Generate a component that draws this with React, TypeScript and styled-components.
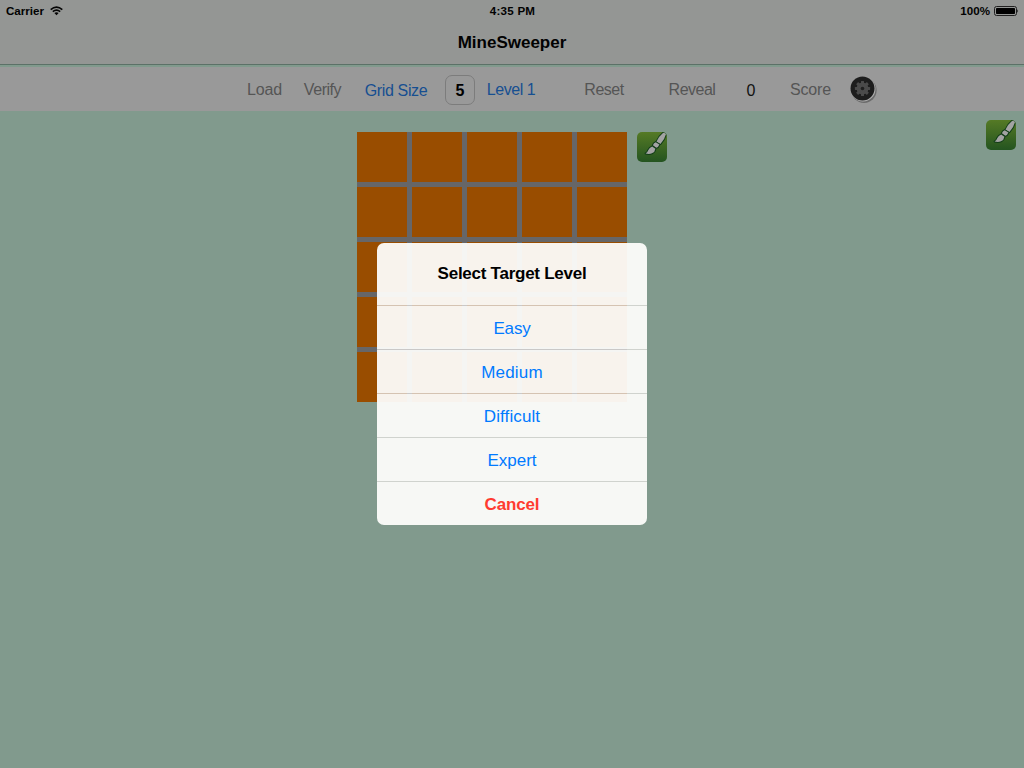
import React from "react";
import styled, { createGlobalStyle } from "styled-components";

const Global = createGlobalStyle`
  body { margin: 0; background: #819a8d; font-family: "Liberation Sans", Arial, sans-serif; }
`;

const Screen = styled.div`
  position: relative;
  width: 1024px;
  height: 768px;
  overflow: hidden;
  background: #819a8d;
`;

const Header = styled.header`
  height: 64px;
  background: #949694;
  border-bottom: 1px solid #5c7167;
  color: #020202;
`;

const StatusBar = styled.div`
  display: grid;
  grid-template-columns: 1fr auto 1fr;
  align-items: center;
  height: 22px;
  padding: 0 5px 0 6px;
  font-size: 11.6px;
  font-weight: 700;
  line-height: 22px;
`;

const Clock = styled.span`
  letter-spacing: 0.25px;
`;

const StatusGroup = styled.div<{ $end?: boolean }>`
  display: flex;
  align-items: center;
  gap: ${(p) => (p.$end ? 4 : 6)}px;
  justify-content: ${(p) => (p.$end ? "flex-end" : "flex-start")};
`;

const Title = styled.h1`
  margin: 0;
  text-align: center;
  font-size: 17px;
  font-weight: 700;
  line-height: 42px;
`;

const Toolbar = styled.nav`
  display: flex;
  align-items: flex-start;
  height: 44px;
  margin-top: 2px;
  padding-left: 247px;
  background: #999999;
`;

const Item = styled.span<{ $w: number; $gap?: number; $color?: string; $drop?: number; $track?: number }>`
  display: flex;
  justify-content: center;
  width: ${(p) => p.$w}px;
  margin-left: ${(p) => p.$gap ?? 0}px;
  padding-top: ${(p) => p.$drop ?? 0}px;
  color: ${(p) => p.$color ?? "#555555"};
  font-size: 16px;
  letter-spacing: ${(p) => p.$track ?? 0}px;
  line-height: 46px;
  white-space: nowrap;
`;

const SizeField = styled.span`
  display: flex;
  box-sizing: border-box;
  align-items: center;
  justify-content: center;
  width: 30px;
  height: 30px;
  margin: 8px 0 0 18px;
  padding-top: 1px;
  border: 1px solid #7c7c7c;
  border-radius: 7px;
  color: #000;
  font-size: 16px;
  font-weight: 700;
`;

const GearButton = styled.span`
  display: flex;
  margin: 8px 0 0 19px;
`;

const Board = styled.main`
  display: flex;
  align-items: flex-start;
  padding: 21px 8px 0 357px;
`;

const Grid = styled.div`
  display: grid;
  grid-template-columns: repeat(5, 50px);
  grid-auto-rows: 50px;
  gap: 5px;
  background: #666668;
`;

const Cell = styled.div`
  background: #994d00;
`;

const BrushButton = styled.div<{ $corner?: boolean }>`
  display: flex;
  margin: ${(p) => (p.$corner ? "-12px 0 0 auto" : "0 0 0 10px")};
`;

const Dialog = styled.section`
  position: absolute;
  top: 243px;
  left: 377px;
  width: 270px;
  border-radius: 7px;
  overflow: hidden;
  text-align: center;
`;

const DialogTitle = styled.h2`
  margin: 0;
  height: 62px;
  background: rgba(254, 254, 252, 0.94);
  color: #000;
  font-size: 17px;
  font-weight: 700;
  letter-spacing: -0.26px;
  line-height: 61px;
`;

const Option = styled.div<{ $cancel?: boolean; $track?: number }>`
  box-sizing: border-box;
  height: 44px;
  border-top: 1px solid rgba(227, 225, 222, 0.8);
  background: rgba(254, 254, 252, 0.94);
  background-clip: padding-box;
  color: ${(p) => (p.$cancel ? "#ff3b30" : "#007aff")};
  font-size: 17px;
  font-weight: ${(p) => (p.$cancel ? 700 : 400)};
  letter-spacing: ${(p) => p.$track ?? 0}px;
  line-height: 45px;
`;

const Wifi = () => (
  <svg width="13" height="10" viewBox="0 0 13 10" fill="none" stroke="#050505" strokeWidth="1.6">
    <path d="M0.7 3.6Q6.5 -1.4 12.3 3.6" />
    <path d="M2.8 5.7Q6.5 2.5 10.2 5.7" />
    <path d="M4.4 7.1Q6.5 5.5 8.6 7.1L6.5 9.3Z" fill="#050505" stroke="none" />
  </svg>
);

const Battery = () => (
  <svg width="25" height="10" viewBox="0 0 25 10">
    <rect x="0.5" y="0.5" width="22" height="9" rx="2" fill="none" stroke="#202020" />
    <rect x="2" y="2" width="19" height="6" rx="0.8" fill="#000" />
    <path d="M23.3 3.2Q25 5 23.3 6.8Z" fill="#111" />
  </svg>
);

const Gear = () => (
  <svg width="28" height="30" viewBox="0 0 28 30">
    <circle cx="14" cy="15.3" r="12.6" fill="#5c5c5c" opacity="0.75" />
    <circle cx="13" cy="14" r="12.5" fill="#aeaeae" />
    <circle cx="12.5" cy="13.4" r="12" fill="#1d1d1d" />
    <g fill="#4b4b4b">
      <circle cx="12.5" cy="13.5" r="5.9" />
      {[0, 45, 90, 135, 180, 225, 270, 315].map((a) => (
        <rect key={a} x="11" y="5.9" width="3" height="4" rx="0.4" transform={`rotate(${a} 12.5 13.5)`} />
      ))}
    </g>
    <circle cx="12.5" cy="13.5" r="1.8" fill="#202020" />
  </svg>
);

const Brush = ({ id }: { id: string }) => (
  <svg width="30" height="30" viewBox="0 0 30 30">
    <defs>
      <linearGradient id={id} x1="0" y1="0" x2="0" y2="1">
        <stop offset="0" stopColor="#557a25" />
        <stop offset="1" stopColor="#245420" />
      </linearGradient>
      <clipPath id={`${id}Clip`}>
        <rect width="30" height="30" rx="5" />
      </clipPath>
    </defs>
    <rect width="30" height="30" rx="5" fill={`url(#${id})`} />
    <g
      clipPath={`url(#${id}Clip)`}
      fill="#a3a3a3"
      stroke="#123d18"
      strokeWidth="2"
      strokeLinejoin="round"
      paintOrder="stroke"
    >
      <path d="M26.2 0.8L29.2 1.6Q28 7 23.4 12L19.4 9.8Q21.6 4.6 26.2 0.8Z" />
      <path d="M18.7 10.3L22.4 12.6Q21.5 15.2 19.2 15.8L15.9 13.3Q16.4 11.2 18.7 10.3Z" />
      <path d="M15.2 14.4L18.4 16.7Q18 20 15 21.3Q12.2 22.4 8.6 21.5Q10.4 20.8 11.2 18.2Q12.4 15.4 15.2 14.4Z" />
    </g>
  </svg>
);

export default function App() {
  return (
    <Screen>
      <Global />
      <Header>
        <StatusBar>
          <StatusGroup>Carrier <Wifi /></StatusGroup>
          <Clock>4:35 PM</Clock>
          <StatusGroup $end>100% <Battery /></StatusGroup>
        </StatusBar>
        <Title>MineSweeper</Title>
      </Header>
      <Toolbar>
        <Item $w={35} $track={-0.1}>Load</Item>
        <Item $w={37} $gap={22} $track={-0.45}>Verify</Item>
        <Item $w={62} $gap={24} $color="#164f91" $drop={1} $track={-0.36}>Grid Size</Item>
        <SizeField>5</SizeField>
        <Item $w={48} $gap={12} $color="#164f91" $track={-0.45}>Level 1</Item>
        <Item $w={40} $gap={49} $track={-0.5}>Reset</Item>
        <Item $w={46} $gap={45} $track={-0.5}>Reveal</Item>
        <Item $w={10} $gap={31} $color="#111" $drop={1}>0</Item>
        <Item $w={41} $gap={34} $track={-0.2}>Score</Item>
        <GearButton><Gear /></GearButton>
      </Toolbar>
      <Board>
        <Grid>
          {Array.from({ length: 25 }, (_, i) => <Cell key={i} />)}
        </Grid>
        <BrushButton><Brush id="boardBrush" /></BrushButton>
        <BrushButton $corner><Brush id="cornerBrush" /></BrushButton>
      </Board>
      <Dialog>
        <DialogTitle>Select Target Level</DialogTitle>
        <Option $track={-0.15}>Easy</Option>
        <Option $track={0.2}>Medium</Option>
        <Option $track={0.1}>Difficult</Option>
        <Option>Expert</Option>
        <Option $cancel $track={-0.15}>Cancel</Option>
      </Dialog>
    </Screen>
  );
}
